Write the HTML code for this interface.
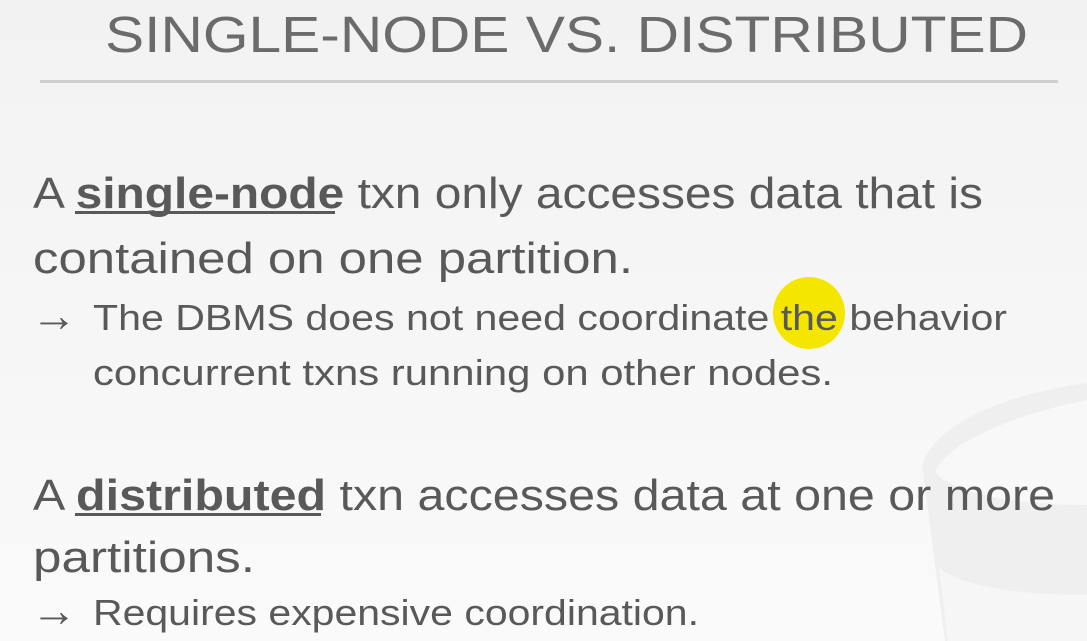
<!DOCTYPE html>
<html><head><meta charset="utf-8"><style>
html,body{margin:0;padding:0;width:1087px;height:641px;overflow:hidden;background:#f4f4f4}
svg{display:block}
text{font-family:"Liberation Sans",sans-serif;fill:#595959}
</style></head><body>
<svg width="1087" height="641" viewBox="0 0 1087 641">
<defs><linearGradient id="bg" x1="0" y1="0" x2="0" y2="1"><stop offset="0" stop-color="#f2f2f2"/><stop offset="1" stop-color="#fafafa"/></linearGradient></defs>
<rect width="1087" height="641" fill="url(#bg)"/>
<path d="M1087 383 C1000 395 935 425 922 465 L945 641 L1087 641 Z" fill="#efefef"/>
<path d="M1087 400 C1010 415 945 445 935 472 C955 495 1020 505 1087 505 Z" fill="#f8f8f8"/>
<path d="M939 568 C965 588 1025 595 1087 595 L1087 641 L948 641 Z" fill="#f6f6f6"/>
<text x="105" y="52" font-size="51" textLength="923" lengthAdjust="spacingAndGlyphs" style="fill:#6b6b6b">SINGLE-NODE VS. DISTRIBUTED</text>
<rect x="40" y="80" width="1018" height="3" fill="#cfcfcf"/>
<circle cx="809" cy="313" r="36" fill="#f5e600"/>
<text x="33" y="208" font-size="44" textLength="950" lengthAdjust="spacingAndGlyphs">A <tspan font-weight="bold">single-node</tspan> txn only accesses data that is</text>
<rect x="75" y="211" width="260" height="3" fill="#595959"/>
<text x="33" y="273" font-size="44" textLength="600" lengthAdjust="spacingAndGlyphs">contained on one partition.</text>
<text x="31" y="331" font-size="46" textLength="46" lengthAdjust="spacingAndGlyphs">→</text>
<text x="93" y="330" font-size="36" textLength="914" lengthAdjust="spacingAndGlyphs">The DBMS does not need coordinate the behavior</text>
<text x="93" y="385" font-size="36" textLength="740" lengthAdjust="spacingAndGlyphs">concurrent txns running on other nodes.</text>
<text x="33" y="510" font-size="44" textLength="1022" lengthAdjust="spacingAndGlyphs">A <tspan font-weight="bold">distributed</tspan> txn accesses data at one or more</text>
<rect x="75" y="513" width="246" height="3" fill="#595959"/>
<text x="33" y="572" font-size="44" textLength="222" lengthAdjust="spacingAndGlyphs">partitions.</text>
<text x="31" y="626" font-size="46" textLength="46" lengthAdjust="spacingAndGlyphs">→</text>
<text x="93" y="625" font-size="36" textLength="606" lengthAdjust="spacingAndGlyphs">Requires expensive coordination.</text>
</svg>
</body></html>
